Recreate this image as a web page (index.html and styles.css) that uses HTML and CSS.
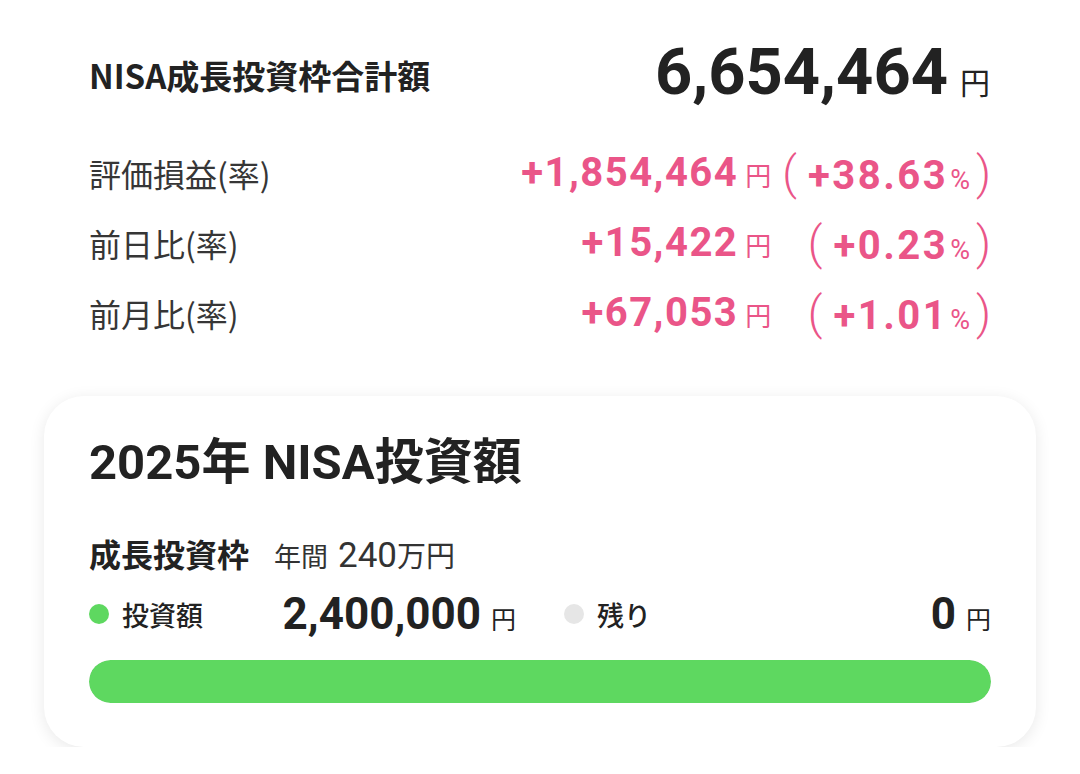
FILE: index.html
```html
<!DOCTYPE html>
<html lang="ja">
<head>
<meta charset="utf-8">
<title>NISA</title>
<link rel="stylesheet" href="styles.css">
</head>
<body>
<main class="page">
  <section class="summary">
    <div class="head">
      <div class="head-title">NISA成長投資枠合計額</div>
      <div class="head-total"><span class="total-num">6,654,464</span><span class="total-yen">円</span></div>
    </div>
    <div class="stats">
      <div class="stat-label">評価損益(率)</div>
      <div class="stat-amt"><span class="amt-num">+1,854,464</span><span class="amt-yen">円</span></div>
      <div class="stat-pct"><span class="paren paren-open">(</span><span class="pct-num">+38.63</span><span class="pct-sign">%</span><span class="paren paren-close">)</span></div>

      <div class="stat-label">前日比(率)</div>
      <div class="stat-amt"><span class="amt-num">+15,422</span><span class="amt-yen">円</span></div>
      <div class="stat-pct"><span class="paren paren-open">(</span><span class="pct-num">+0.23</span><span class="pct-sign">%</span><span class="paren paren-close">)</span></div>

      <div class="stat-label">前月比(率)</div>
      <div class="stat-amt"><span class="amt-num">+67,053</span><span class="amt-yen">円</span></div>
      <div class="stat-pct"><span class="paren paren-open">(</span><span class="pct-num">+1.01</span><span class="pct-sign">%</span><span class="paren paren-close">)</span></div>
    </div>
  </section>

  <section class="card">
    <h2 class="card-title">2025年 NISA投資額</h2>
    <div class="frame">
      <span class="frame-name">成長投資枠</span>
      <span class="frame-limit"><span class="limit-small">年間</span><span class="limit-num">240</span><span class="limit-unit">万円</span></span>
    </div>
    <div class="legend">
      <div class="legend-item">
        <span class="dot dot-green"></span>
        <span class="legend-label">投資額</span>
        <span class="legend-amt"><span class="legend-num">2,400,000</span><span class="legend-yen">円</span></span>
      </div>
      <div class="legend-item">
        <span class="dot dot-gray"></span>
        <span class="legend-label">残り</span>
        <span class="legend-amt"><span class="legend-num">0</span><span class="legend-yen">円</span></span>
      </div>
    </div>
    <div class="bar"><div class="bar-fill" style="width: 100%"></div></div>
  </section>
</main>
</body>
</html>
```

FILE: styles.css
```css
* { box-sizing: border-box; }

html, body {
  margin: 0;
  padding: 0;
  background: #ffffff;
}

body {
  font-family: Roboto, "Noto Sans CJK JP", sans-serif;
  color: #222222;
}

.page {
  width: 1080px;
}

.summary {
  padding: 40px 89px 0 89px;
}

.head {
  display: flex;
  justify-content: space-between;
  align-items: center;
  height: 64px;
}

.head-title {
  font-family: "Noto Sans CJK JP", sans-serif;
  font-weight: 700;
  font-size: 33px;
  line-height: 1;
  color: #222;
  margin-top: 6px;
}

.head-total {
  display: flex;
  align-items: baseline;
  margin-right: 1px;
}

.total-num {
  font-weight: 700;
  font-size: 65px;
  line-height: 64px;
  color: #222;
}

.total-yen {
  font-family: "Noto Sans CJK JP", sans-serif;
  font-size: 30px;
  font-weight: 400;
  margin-left: 12px;
  color: #222;
}

.stats {
  margin-top: 34px;
  display: grid;
  grid-template-columns: 1fr auto auto;
  grid-auto-rows: 70px;
  align-items: center;
}

.stat-label {
  font-family: "Noto Sans CJK JP", sans-serif;
  font-size: 32px;
  color: #363636;
  line-height: 1;
}

.stat-label, .stat-amt, .stat-pct { white-space: nowrap; }

.stat-amt, .stat-pct {
  justify-self: end;
  display: flex;
  align-items: baseline;
  color: #ea5588;
}

.amt-num, .pct-num {
  font-weight: 700;
  font-size: 40px;
  letter-spacing: 1.5px;
  line-height: 1;
}

.pct-num {
  letter-spacing: 2.5px;
}

.amt-yen {
  font-family: "Noto Sans CJK JP", sans-serif;
  font-size: 26px;
  margin-left: 7px;
}

.paren {
  font-family: Roboto, sans-serif;
  font-size: 46px;
  font-weight: 300;
  line-height: 1;
}

.paren-open {
  margin-left: 11px;
  margin-right: 11px;
}

.paren-close {
  margin-left: 6px;
}

.pct-sign {
  font-size: 27px;
  margin-left: 2px;
}

.card {
  margin: 48px 44px 0 44px;
  background: #fff;
  border-radius: 40px;
  box-shadow: 0 3px 16px rgba(0, 0, 0, 0.09);
  padding: 37px 45px 44px 45px;
}

.card-title {
  margin: 0;
  font-family: Roboto, "Noto Sans CJK JP", sans-serif;
  font-weight: 700;
  font-size: 49px;
  line-height: 60px;
  color: #222;
}

.frame {
  margin-top: 40px;
  display: flex;
  align-items: baseline;
  height: 40px;
}

.frame-name {
  font-family: "Noto Sans CJK JP", sans-serif;
  font-weight: 700;
  font-size: 32px;
  line-height: 40px;
  color: #222;
}

.frame-limit {
  margin-left: 25px;
  display: flex;
  align-items: baseline;
  color: #333;
}

.limit-small {
  font-family: "Noto Sans CJK JP", sans-serif;
  font-size: 27px;
}

.limit-num {
  font-size: 35px;
  margin-left: 10px;
}

.limit-unit {
  font-family: "Noto Sans CJK JP", sans-serif;
  font-size: 29px;
}

.legend {
  margin-top: 16px;
  display: grid;
  grid-template-columns: 1fr 1fr;
  column-gap: 48px;
  height: 50px;
}

.legend-item {
  display: flex;
  align-items: center;
}

.dot {
  width: 20px;
  height: 20px;
  border-radius: 50%;
  flex: none;
}

.dot-green { background: #5ed860; }
.dot-gray { background: #e6e6e6; }

.legend-label {
  font-family: "Noto Sans CJK JP", sans-serif;
  font-weight: 500;
  font-size: 27px;
  margin-left: 13px;
  color: #222;
}

.legend-amt {
  margin-left: auto;
  display: flex;
  align-items: baseline;
}

.legend-num {
  font-weight: 700;
  font-size: 44px;
  line-height: 50px;
  color: #222;
}

.legend-yen {
  font-family: "Noto Sans CJK JP", sans-serif;
  font-size: 25px;
  margin-left: 10px;
  color: #222;
}

.bar {
  margin-top: 21px;
  height: 43px;
  border-radius: 22px;
  background: #e6e6e6;
  overflow: hidden;
}

.bar-fill {
  height: 100%;
  background: #5ed860;
  border-radius: 22px;
}
```
